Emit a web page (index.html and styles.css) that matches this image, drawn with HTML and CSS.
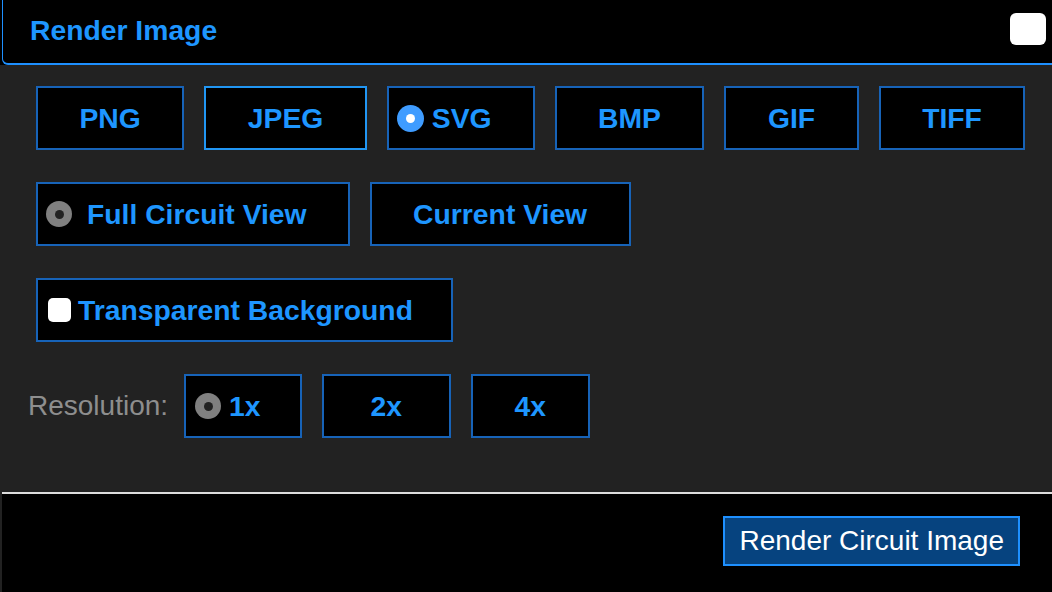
FILE: index.html
```html
<!DOCTYPE html>
<html>
<head>
<meta charset="utf-8">
<link rel="stylesheet" href="styles.css">
</head>
<body>
<div class="top">
  <div class="header">
    <span class="title">Render Image</span>
    <span class="close"></span>
  </div>
</div>
<main class="main">
  <div class="row">
    <div class="opt">PNG</div>
    <div class="opt focus">JPEG</div>
    <div class="opt with-radio"><span class="radio blue"></span>SVG</div>
    <div class="opt">BMP</div>
    <div class="opt">GIF</div>
    <div class="opt">TIFF</div>
  </div>
  <div class="row">
    <div class="opt with-radio"><span class="radio gray wide-gap"></span>Full Circuit View</div>
    <div class="opt">Current View</div>
  </div>
  <div class="row">
    <div class="opt with-check"><span class="check"></span>Transparent Background</div>
  </div>
  <div class="row res-row">
    <span class="res-label">Resolution:</span>
    <div class="opt with-radio tight"><span class="radio gray"></span>1x</div>
    <div class="opt wide">2x</div>
    <div class="opt">4x</div>
  </div>
</main>
<footer class="footer">
  <button class="render">Render Circuit Image</button>
</footer>
</body>
</html>
```
FILE: styles.css
```css
html, body {
  margin: 0;
  padding: 0;
}
body {
  height: 592px;
  display: flex;
  flex-direction: column;
  background: #222222;
  font-family: "Liberation Sans", Arial, sans-serif;
  font-size: 28px;
  overflow: hidden;
}
.top {
  background: #000;
}
.header {
  height: 60px;
  margin-left: 2px;
  border-left: 1px solid #1e90ff;
  border-bottom: 2px solid #1e90ff;
  border-bottom-left-radius: 6px;
  display: flex;
  align-items: center;
  justify-content: space-between;
  padding: 0 6px 3px 27px;
}
.title {
  color: #1e96ff;
  font-weight: bold;
  font-size: 28.3px;
}
.close {
  width: 36px;
  height: 32px;
  background: #fff;
  border-radius: 6px;
  margin-top: -2px;
}
.main {
  flex: 1;
  display: flex;
  flex-direction: column;
  gap: 32px;
  padding: 21px 0 0 36px;
}
.row {
  display: flex;
  gap: 20px;
  align-items: center;
}
.opt {
  height: 60px;
  border: 2px solid #1763b8;
  background: #000;
  color: #1e96ff;
  font-weight: bold;
  font-size: 28.3px;
  display: flex;
  align-items: center;
  padding: 0 41.5px;
  white-space: nowrap;
}
.opt.focus {
  border-color: #2196f3;
}
.opt.with-radio {
  padding-left: 8px;
  padding-right: 41px;
}
.opt.with-radio.tight {
  padding-left: 9px;
  padding-right: 39px;
}
.opt.wide {
  padding: 0 47px;
}
.opt.with-check {
  padding-left: 10px;
  padding-right: 38px;
}
.radio {
  width: 26px;
  height: 26px;
  border-radius: 50%;
  margin-right: 8px;
  flex: none;
  display: flex;
  align-items: center;
  justify-content: center;
}
.radio::after {
  content: "";
  width: 9px;
  height: 9px;
  border-radius: 50%;
}
.radio.blue {
  width: 27px;
  height: 27px;
  background: #3f9cff;
}
.radio.blue::after {
  background: #fff;
}
.radio.gray {
  background: #808080;
}
.radio.gray::after {
  background: #222;
}
.radio.wide-gap {
  margin-right: 15px;
}
.check {
  width: 23px;
  height: 24px;
  background: #fff;
  border-radius: 5px;
  margin-right: 7px;
  flex: none;
}
.res-row {
  margin-left: -8px;
}
.res-label {
  color: #8e8e8e;
  margin-right: -4px;
}
.footer {
  margin-left: 2px;
  border-top: 2px solid #dddddd;
  background: #000;
  display: flex;
  justify-content: flex-end;
  align-items: flex-start;
  padding: 22px 32px 0 0;
  box-sizing: border-box;
  flex: none;
  height: 100px;
}
.render {
  height: 50px;
  padding: 0 14px;
  background: #06437f;
  border: 2px solid #1e90ff;
  color: #fff;
  font-family: "Liberation Sans", Arial, sans-serif;
  font-size: 28px;
  line-height: 1;
}
```
